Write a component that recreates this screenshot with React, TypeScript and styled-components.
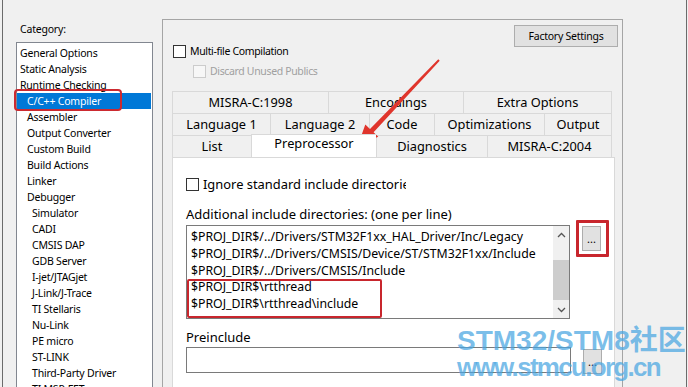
import styled, { createGlobalStyle } from 'styled-components'

const GlobalStyle = createGlobalStyle`
  html, body {
    margin: 0;
    padding: 0;
    background: #f0f0f0;
    overflow: hidden;
  }
  body {
    font-family: "Noto Sans", "Segoe UI", sans-serif;
    color: #000;
  }
`

const Window = styled.div`
  position: relative;
  box-sizing: border-box;
  width: 685px;
  height: 387px;
  margin-left: 2px;
  border-left: 1px solid #6b6b6b;
  border-right: 1px solid #6b6b6b;
  background: #f0f0f0;
  display: flex;
  overflow: hidden;
`

const Sidebar = styled.div`
  width: 159px;
  flex-shrink: 0;
  padding: 22px 0 0 13px;
  box-sizing: border-box;
`

const CategoryLabel = styled.div`
  margin: 0 0 6px 4px;
  font-size: 10.5px;
  letter-spacing: -0.2px;
  line-height: 14px;
  height: 14px;
`

const CategoryList = styled.div`
  width: 137px;
  height: 420px;
  box-sizing: border-box;
  border: 1px solid #828790;
  background: #fff;
  padding-top: 2px;
`

const CategoryItem = styled.div<{ $level: number; $selected?: boolean }>`
  position: relative;
  height: 16px;
  line-height: 16px;
  font-size: 10.5px;
  letter-spacing: -0.2px;
  white-space: nowrap;
  padding-left: ${(p) => [3, 10, 15][p.$level]}px;
  background: ${(p) => (p.$selected ? '#0078d7' : 'transparent')};
  color: ${(p) => (p.$selected ? '#fff' : '#000')};
  margin-right: 1px;

  ${(p) =>
    p.$selected &&
    `
    &::after {
      content: '';
      position: absolute;
      left: -3px;
      top: -4px;
      width: 108px;
      height: 22px;
      box-sizing: border-box;
      border: 2px solid #cc2a30;
      border-radius: 4px;
    }
  `}
`

const Frame = styled.div`
  width: 461px;
  flex-shrink: 0;
  margin-top: 19px;
  box-sizing: border-box;
  border: 1px solid #a5a5a5;
  border-bottom: none;
  padding: 5px 4px 0 10px;
`

const Header = styled.div`
  display: flex;
  justify-content: space-between;
  align-items: flex-start;
  height: 66px;
`

const Options = styled.div`
  padding-top: 16px;
`

const OptionRow = styled.label<{ $indent?: number; $disabled?: boolean }>`
  display: flex;
  align-items: center;
  gap: 4px;
  height: 20px;
  margin-left: ${(p) => p.$indent ?? 0}px;
  font-size: 10.5px;
  letter-spacing: -0.35px;
  color: ${(p) => (p.$disabled ? '#a0a0a0' : '#000')};
  white-space: nowrap;
`

const Box = styled.span<{ $disabled?: boolean }>`
  width: 13px;
  height: 13px;
  box-sizing: border-box;
  flex-shrink: 0;
  border: 1px solid ${(p) => (p.$disabled ? '#cccccc' : '#333')};
  background: ${(p) => (p.$disabled ? '#f7f7f7' : '#fff')};
`

const FactoryButton = styled.button`
  width: 104px;
  height: 22px;
  box-sizing: border-box;
  border: 1px solid #adadad;
  background: #e1e1e1;
  font-family: inherit;
  font-size: 10.5px;
  letter-spacing: -0.25px;
  color: #000;
  padding: 0;
`

const Tabs = styled.div`
  margin-left: -1px;
  width: 443px;
`

const TabRow = styled.div`
  display: flex;
  height: 22px;
`

const Tab = styled.div<{ $w: number; $active?: boolean }>`
  width: ${(p) => p.$w}px;
  box-sizing: border-box;
  border-left: 1px solid #d9d9d9;
  border-top: 1px solid #d9d9d9;
  background: ${(p) => (p.$active ? '#fff' : '#f0f0f0')};
  font-size: 12.8px;
  text-align: center;
  line-height: ${(p) => (p.$active ? 17 : 21)}px;
  height: ${(p) => (p.$active ? 23 : 22)}px;
  margin-top: ${(p) => (p.$active ? -1 : 0)}px;
  position: relative;
  z-index: ${(p) => (p.$active ? 1 : 0)};

  &:last-child {
    border-right: 1px solid #d9d9d9;
  }
`

const Pane = styled.div`
  position: relative;
  height: 240px;
  box-sizing: border-box;
  border: 1px solid #d9d9d9;
  background: #fff;
  padding: 16px 0 0 13px;
`

const ClipText = styled.span`
  display: inline-block;
  width: 203px;
  overflow: hidden;
  font-size: 12.9px;
  letter-spacing: 0;
`

const FieldLabel = styled.div<{ $top: number }>`
  margin-top: ${(p) => p.$top}px;
  font-size: 13px;
  line-height: 16px;
`

const FieldRow = styled.div<{ $top: number }>`
  display: flex;
  align-items: flex-start;
  gap: 12px;
  margin-top: ${(p) => p.$top}px;
`

const TextArea = styled.div`
  position: relative;
  width: 384px;
  height: 94px;
  box-sizing: border-box;
  border: 1px solid #7a7a7a;
  padding: 3px 0 0 4px;
  font-size: 12.3px;
  line-height: 16.75px;
  white-space: nowrap;
`

const Lines = styled.div`
  overflow: hidden;
  width: 360px;
`

const Highlight = styled.div`
  position: absolute;
  left: 0px;
  top: 53px;
  width: 195px;
  height: 39px;
  box-sizing: border-box;
  border: 2.5px solid #c8262d;
  border-radius: 2px;
`

const ScrollBar = styled.div`
  position: absolute;
  right: 0;
  top: 0;
  bottom: 0;
  width: 16px;
  background: #f0f0f0;
  display: flex;
  flex-direction: column;
  align-items: center;
`

const ScrollArrow = styled.div`
  height: 17px;
  display: flex;
  align-items: center;
  justify-content: center;
`

const Thumb = styled.div`
  width: 16px;
  height: 40px;
  margin-top: 17px;
  background: #cdcdcd;
  flex-shrink: 0;
`

const Spacer = styled.div`
  flex: 1;
`

const Input = styled.div`
  width: 385px;
  height: 26px;
  box-sizing: border-box;
  border: 1px solid #7a7a7a;
`

const DotsButton = styled.div<{ $top: number; $marked?: boolean }>`
  position: relative;
  width: 19px;
  height: 25px;
  margin-top: ${(p) => p.$top}px;
  box-sizing: border-box;
  border: 1px solid #adadad;
  background: #e1e1e1;
  font-size: 11px;
  text-align: center;
  line-height: 24px;

  ${(p) =>
    p.$marked &&
    `
    &::after {
      content: '';
      position: absolute;
      left: -7px;
      top: -7px;
      width: 33px;
      height: 37px;
      box-sizing: border-box;
      border: 3px solid #c8262d;
      border-radius: 1px;
    }
  `}
`

const Watermark = styled.div`
  position: absolute;
  left: 454px;
  top: 327px;
  font-family: "Liberation Sans", "Noto Sans CJK SC", sans-serif;
  font-weight: bold;
  color: rgba(72, 165, 225, 0.72);
  line-height: 27px;
  pointer-events: none;
`

const MarkLine = styled.div<{ $size: number; $spacing: number }>`
  font-size: ${(p) => p.$size}px;
  letter-spacing: ${(p) => p.$spacing}px;
  white-space: nowrap;
`

const Arrow = styled.svg`
  position: absolute;
  left: -3px;
  top: 0;
  pointer-events: none;
`

const categories: [string, number][] = [
  ['General Options', 0],
  ['Static Analysis', 0],
  ['Runtime Checking', 0],
  ['C/C++ Compiler', 1],
  ['Assembler', 1],
  ['Output Converter', 1],
  ['Custom Build', 1],
  ['Build Actions', 1],
  ['Linker', 1],
  ['Debugger', 1],
  ['Simulator', 2],
  ['CADI', 2],
  ['CMSIS DAP', 2],
  ['GDB Server', 2],
  ['I-jet/JTAGjet', 2],
  ['J-Link/J-Trace', 2],
  ['TI Stellaris', 2],
  ['Nu-Link', 2],
  ['PE micro', 2],
  ['ST-LINK', 2],
  ['Third-Party Driver', 2],
  ['TI MSP-FET', 2],
]

const tabRows: [string, number][][] = [
  [
    ['MISRA-C:1998', 156],
    ['Encodings', 135],
    ['Extra Options', 149],
  ],
  [
    ['Language 1', 98],
    ['Language 2', 99],
    ['Code', 65],
    ['Optimizations', 110],
    ['Output', 68],
  ],
  [
    ['List', 79],
    ['Preprocessor', 125],
    ['Diagnostics', 111],
    ['MISRA-C:2004', 125],
  ],
]

const includes = [
  '$PROJ_DIR$/../Drivers/STM32F1xx_HAL_Driver/Inc/Legacy',
  '$PROJ_DIR$/../Drivers/CMSIS/Device/ST/STM32F1xx/Include',
  '$PROJ_DIR$/../Drivers/CMSIS/Include',
  '$PROJ_DIR$\\rtthread',
  '$PROJ_DIR$\\rtthread\\include',
]

const App = () => {
  return (
    <Window>
      <GlobalStyle />
      <Sidebar>
        <CategoryLabel>Category:</CategoryLabel>
        <CategoryList>
          {categories.map(([name, level]) => (
            <CategoryItem key={name} $level={level} $selected={name === 'C/C++ Compiler'}>
              {name}
            </CategoryItem>
          ))}
        </CategoryList>
      </Sidebar>

      <Frame>
        <Header>
          <Options>
            <OptionRow>
              <Box />
              Multi-file Compilation
            </OptionRow>
            <OptionRow $indent={20} $disabled>
              <Box $disabled />
              Discard Unused Publics
            </OptionRow>
          </Options>
          <FactoryButton>Factory Settings</FactoryButton>
        </Header>

        <Tabs>
          {tabRows.map((row, i) => (
            <TabRow key={i}>
              {row.map(([label, w]) => (
                <Tab key={label} $w={w} $active={label === 'Preprocessor'}>
                  {label}
                </Tab>
              ))}
            </TabRow>
          ))}
          <Pane>
            <OptionRow>
              <Box />
              <ClipText>Ignore standard include directories</ClipText>
            </OptionRow>
            <FieldLabel $top={12}>Additional include directories: (one per line)</FieldLabel>
            <FieldRow $top={3}>
              <TextArea>
                <Lines>
                  {includes.map((line) => (
                    <div key={line}>{line}</div>
                  ))}
                </Lines>
                <Highlight />
                <ScrollBar>
                  <ScrollArrow>
                    <svg width="9" height="6" viewBox="0 0 9 6">
                      <path d="M1 5 L4.5 1.5 L8 5" fill="none" stroke="#555" strokeWidth="1.3" />
                    </svg>
                  </ScrollArrow>
                  <Thumb />
                  <Spacer />
                  <ScrollArrow>
                    <svg width="9" height="6" viewBox="0 0 9 6">
                      <path d="M1 1 L4.5 4.5 L8 1" fill="none" stroke="#555" strokeWidth="1.3" />
                    </svg>
                  </ScrollArrow>
                </ScrollBar>
              </TextArea>
              <DotsButton $top={1} $marked>...</DotsButton>
            </FieldRow>
            <FieldLabel $top={10}>Preinclude</FieldLabel>
            <FieldRow $top={2}>
              <Input />
              <DotsButton $top={2}>...</DotsButton>
            </FieldRow>
          </Pane>
        </Tabs>
      </Frame>

      <Arrow width="688" height="387" viewBox="0 0 688 387">
        <polygon
          points="358,145 378.3,136.8 373.6,132.3 439.7,60.7 438.3,59.3 370,128.9 365.3,124.4"
          fill="#e0352c"
        />
      </Arrow>

      <Watermark>
        <MarkLine $size={28} $spacing={0}>STM32/STM8社区</MarkLine>
        <MarkLine $size={26} $spacing={-1.7}>www.stmcu.org.cn</MarkLine>
      </Watermark>
    </Window>
  )
}

export default App
